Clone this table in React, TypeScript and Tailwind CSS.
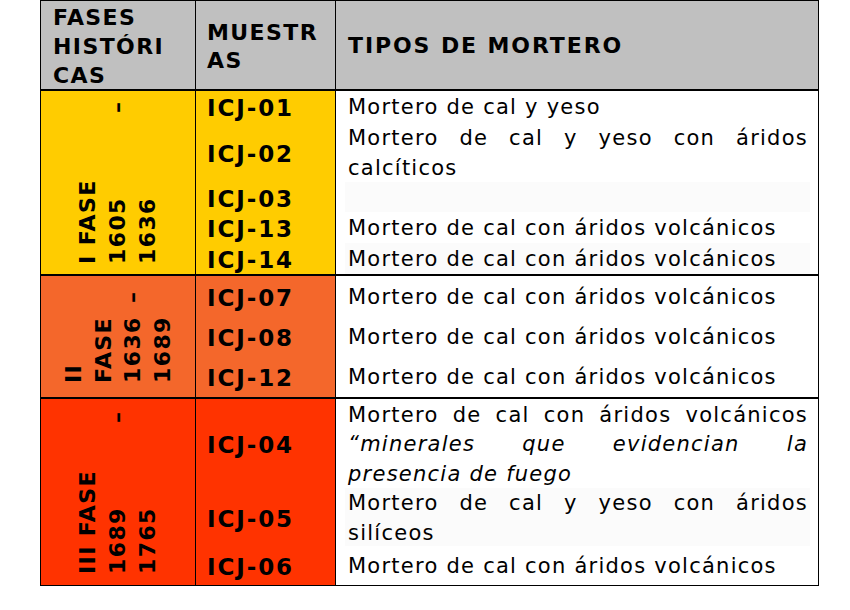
import React from "react";

type Row = {
  code: string;
  h: string;
  shade?: boolean;
  body: React.ReactNode;
};

type Phase = {
  bg: string;
  box: string;
  lead: string;
  lines: string[][];
  rows: Row[];
};

const volc = "Mortero de cal con áridos volcánicos";

const phases: Phase[] = [
  {
    bg: "bg-[#ffcc00]",
    box: "h-[163px]",
    lead: "leading-[30px]",
    lines: [["I FASE"], ["1605", "–"], ["1636"]],
    rows: [
      { code: "ICJ-01", h: "h-[31px]", body: "Mortero de cal y yeso" },
      { code: "ICJ-02", h: "h-[60px]", body: "Mortero de cal y yeso con áridos calcíticos" },
      { code: "ICJ-03", h: "h-[30px]", shade: true, body: "" },
      { code: "ICJ-13", h: "h-[31px]", body: volc },
      { code: "ICJ-14", h: "h-[31px]", shade: true, body: volc },
    ],
  },
  {
    bg: "bg-[#f4672b]",
    box: "h-[92px]",
    lead: "leading-[29.5px]",
    lines: [["II"], ["FASE"], ["1636", "–"], ["1689"]],
    rows: [
      { code: "ICJ-07", h: "h-[40px]", body: volc },
      { code: "ICJ-08", h: "h-[40px]", body: volc },
      { code: "ICJ-12", h: "h-[41px]", body: volc },
    ],
  },
  {
    bg: "bg-[#ff3300]",
    box: "h-[163px]",
    lead: "leading-[30px]",
    lines: [["III FASE"], ["1689", "–"], ["1765"]],
    rows: [
      {
        code: "ICJ-04",
        h: "h-[89px]",
        body: (
          <>
            Mortero de cal con áridos volcánicos{" "}
            <em className="italic">“minerales que evidencian la presencia de fuego</em>
          </>
        ),
      },
      { code: "ICJ-05", h: "h-[58px]", shade: true, body: "Mortero de cal y yeso con áridos silíceos" },
      { code: "ICJ-06", h: "h-[39px]", body: volc },
    ],
  },
];

const bold = "font-bold text-[22px] tracking-[1.4px] text-black";

export default function App() {
  return (
    <div className="w-[850px] h-[610px] bg-white font-['DejaVu_Sans',sans-serif] text-black">
      <div className="ml-[40px] w-[779px] border border-black flex flex-col">
        {/* header */}
        <div className="flex h-[90px] bg-[#c0c0c0] border-b-2 border-black">
          <div className={`w-[155px] border-r border-black pl-[12px] pt-[3px] flex items-center leading-[29px] ${bold}`}>
            <div>
              FASES
              <br />
              HISTÓRI
              <br />
              CAS
            </div>
          </div>
          <div className={`w-[140px] border-r border-black pl-[11px] pt-[3px] flex items-center leading-[27.5px] ${bold}`}>
            <div>
              MUESTR
              <br />
              AS
            </div>
          </div>
          <div className="flex-1 pl-[12px] flex items-center font-bold text-[22px] tracking-[1.9px]">
            TIPOS DE MORTERO
          </div>
        </div>

        {phases.map((p, i) => (
          <div key={i} className={`flex ${i < phases.length - 1 ? "border-b-2 border-black" : ""}`}>
            <div className={`w-[155px] shrink-0 border-r border-black flex items-center justify-center ${p.bg}`}>
              <div
                className={`[writing-mode:vertical-rl] rotate-180 ${p.box} ${p.lead} font-bold text-[22px] tracking-[1.4px]`}
              >
                {p.lines.map((l, j) => (
                  <div key={j} className="flex justify-between">
                    {l.map((s, k) => (
                      <span key={k} className="whitespace-pre">
                        {s}
                      </span>
                    ))}
                  </div>
                ))}
              </div>
            </div>
            <div className="flex-1 flex flex-col">
              {p.rows.map((r) => (
                <div key={r.code} className={`flex ${r.h}`}>
                  <div
                    className={`w-[140px] shrink-0 border-r border-black pl-[11px] pt-[4px] flex items-center font-bold text-[23px] tracking-[1.9px] ${p.bg}`}
                  >
                    {r.code}
                  </div>
                  <div className="flex-1 pl-[9px] pr-[8px] bg-white">
                    <div
                      className={`h-full pl-[3px] pr-[2px] pt-[3px] flex items-center ${r.shade ? "bg-[#fbfbfb]" : ""}`}
                    >
                      <p className="w-full text-[21px] leading-[29.5px] tracking-[1.25px] text-justify">{r.body}</p>
                    </div>
                  </div>
                </div>
              ))}
            </div>
          </div>
        ))}
      </div>
    </div>
  );
}
